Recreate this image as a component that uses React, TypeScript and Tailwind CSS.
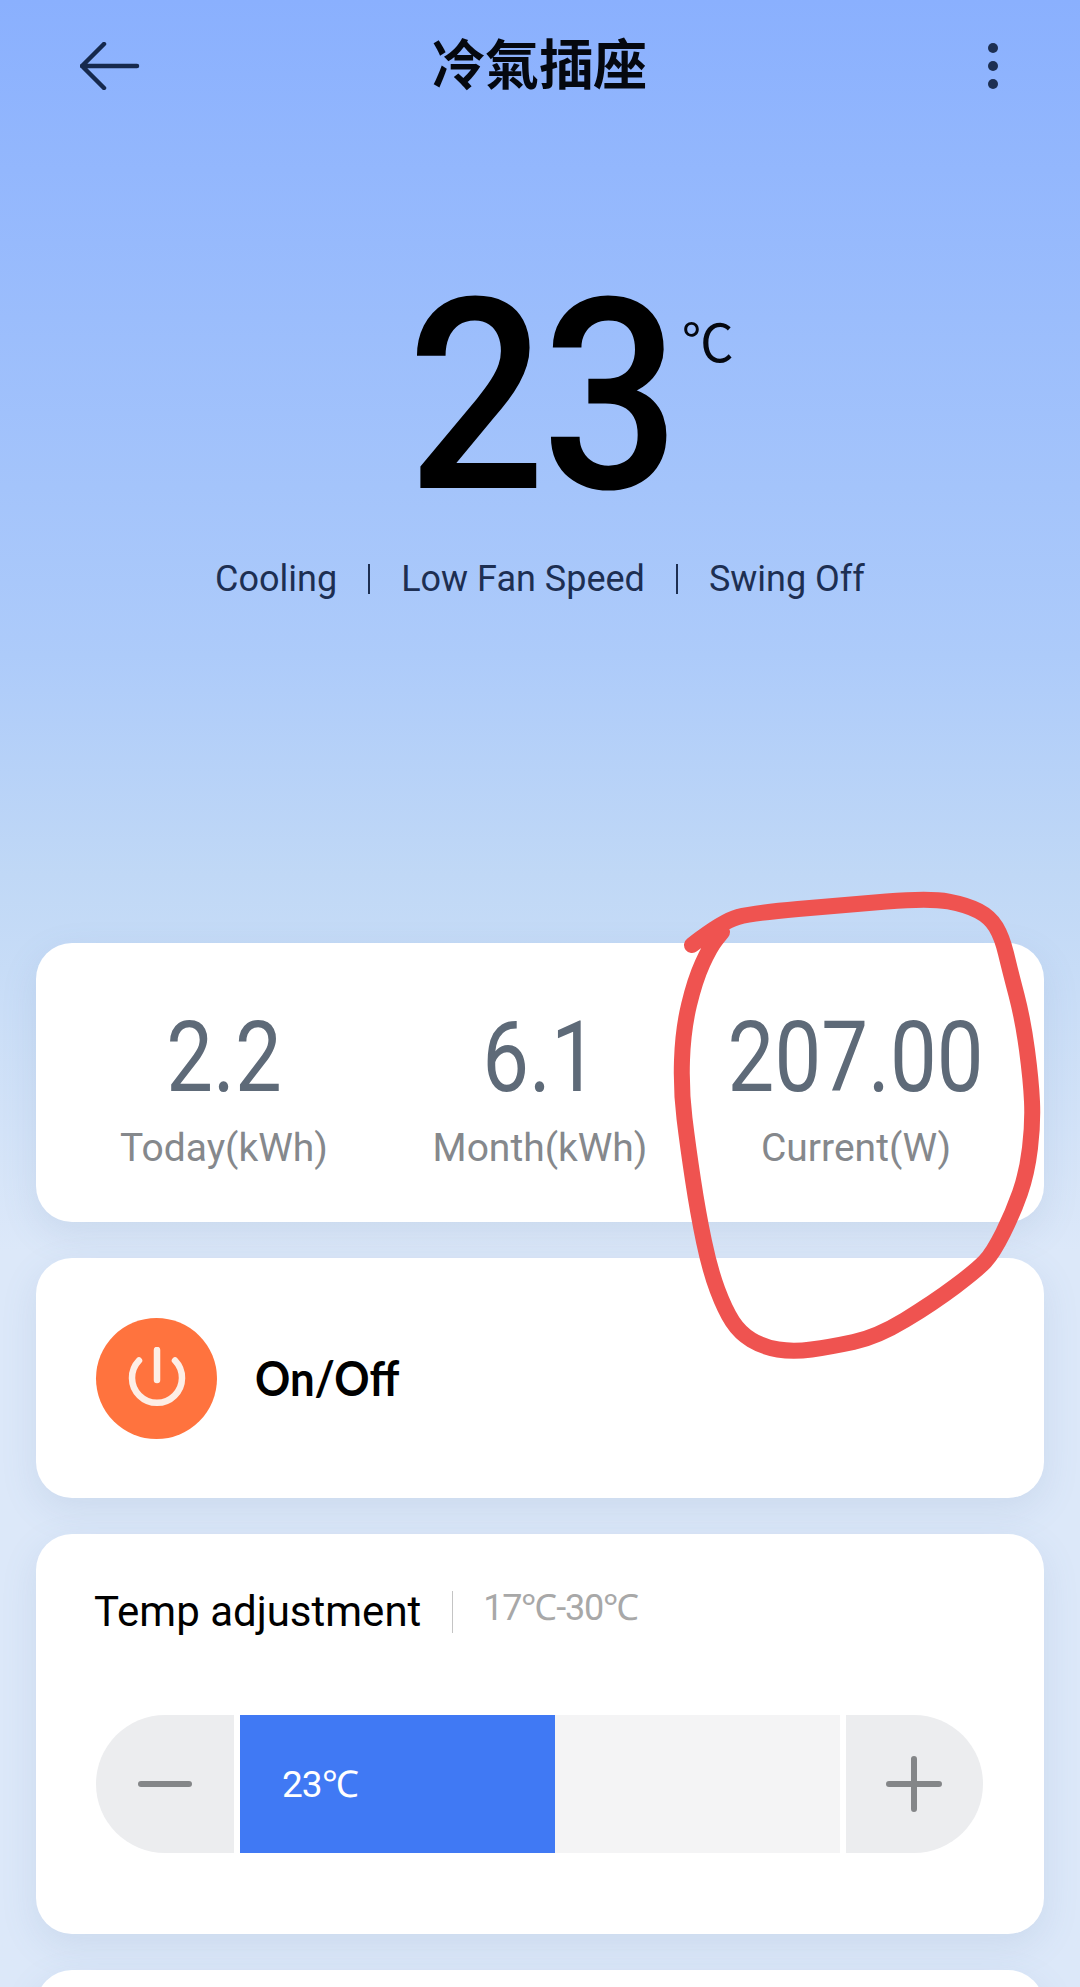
import React from "react"

const stats = [
  { value: "2.2", label: "Today(kWh)" },
  { value: "6.1", label: "Month(kWh)" },
  { value: "207.00", label: "Current(W)" },
]

// the red pen stroke drawn on the screenshot
const penPoints = [
  [692, 945], [723, 921], [753, 913], [843, 905], [930, 898], [967, 905], [990, 917],
  [1002, 937], [1010, 970], [1023, 1020], [1031, 1080], [1033, 1123], [1027, 1173],
  [1013, 1213], [993, 1253], [977, 1270], [933, 1303], [877, 1337], [830, 1347],
  [793, 1352], [763, 1347], [740, 1333], [725, 1310], [710, 1270], [698, 1213],
  [688, 1147], [681, 1090], [683, 1030], [695, 980], [710, 947], [722, 932],
]

function smoothPath(pts: number[][]) {
  let d = `M${pts[0][0]} ${pts[0][1]}`
  for (let i = 1; i < pts.length - 1; i++) {
    const mx = (pts[i][0] + pts[i + 1][0]) / 2
    const my = (pts[i][1] + pts[i + 1][1]) / 2
    d += `Q${pts[i][0]} ${pts[i][1]} ${mx} ${my}`
  }
  const last = pts[pts.length - 1]
  return d + `L${last[0]} ${last[1]}`
}

const cardClass =
  "bg-white rounded-[36px] shadow-[0_12px_36px_rgba(90,120,165,0.13)]"

function PowerIcon() {
  return (
    <svg width="60" height="62" viewBox="0 0 60 62" fill="none" stroke="#fdeee6" strokeWidth="6.5" strokeLinecap="round">
      <path d="M12 13.5a25 25 0 1 0 36 0" />
      <path d="M30 3v30" />
    </svg>
  )
}

export default function App() {
  return (
    <div className="relative w-[1080px] h-[1987px] overflow-hidden font-['Roboto',sans-serif] bg-[linear-gradient(180deg,#8ab0fe_0%,#adcbfa_33%,#c0d8f6_44%,#dce8f9_63%,#dce8f9_100%)]">
      {/* Top bar */}
      <header className="grid grid-cols-[1fr_auto_1fr] items-center h-[132px] pl-[80px] pr-[82px]">
        <svg width="60" height="48" viewBox="0 0 60 48" fill="none" stroke="#16294d" strokeWidth="4.5" strokeLinecap="round" strokeLinejoin="round">
          <path d="M2 24h55M24 2 2 24l22 22" />
        </svg>
        <h1 className="text-[54px] leading-none -mt-[8px] font-bold text-[#05080f] font-['Noto_Sans_CJK_TC',sans-serif]">
          冷氣插座
        </h1>
        <div className="flex flex-col gap-[8px] justify-self-end">
          <span className="w-[10px] h-[10px] rounded-full bg-[#1d2f52]" />
          <span className="w-[10px] h-[10px] rounded-full bg-[#1d2f52]" />
          <span className="w-[10px] h-[10px] rounded-full bg-[#1d2f52]" />
        </div>
      </header>

      {/* Current setting */}
      <section className="h-[811px] flex flex-col items-center pt-[130px]">
        <div className="flex items-start h-[270px] pl-[44px]">
          <span className="text-[267px] leading-[270px] font-medium text-black tracking-[-4px] scale-x-[0.91]">
            23
          </span>
          <span className="text-[52px] leading-none mt-[52px] -ml-[8px] text-[#05080f] tracking-[-4px] font-['Noto_Sans_CJK_TC',sans-serif]">
            ℃
          </span>
        </div>
        <div className="flex items-center mt-[25px] text-[36px] leading-[44px] text-[#1d2f52]">
          <span>Cooling</span>
          <span className="w-[2px] h-[30px] mx-[31px] bg-[#1d2f52]" />
          <span>Low Fan Speed</span>
          <span className="w-[2px] h-[30px] mx-[31px] bg-[#1d2f52]" />
          <span>Swing Off</span>
        </div>
      </section>

      <main className="flex flex-col gap-[36px] px-[36px]">
        {/* Power usage */}
        <div className={`${cardClass} h-[279px] grid grid-cols-3 px-[30px] pt-[65px]`}>
          {stats.map((s) => (
            <div key={s.label} className="flex flex-col items-center">
              <span className="text-[98px] leading-[100px] font-normal text-[#5e6a78] scale-x-[0.85]">
                {s.value}
              </span>
              <span className="mt-[18px] text-[39px] leading-[44px] font-normal text-[#85888c]">
                {s.label}
              </span>
            </div>
          ))}
        </div>

        {/* On/Off */}
        <div className={`${cardClass} h-[240px] flex items-center pl-[60px] gap-[38px]`}>
          <div className="w-[121px] h-[121px] rounded-full bg-[#ff733e] flex items-center justify-center">
            <PowerIcon />
          </div>
          <span className="text-[48px] leading-none font-bold text-black font-['Lato',sans-serif] origin-left scale-x-[0.91]">
            On/Off
          </span>
        </div>

        {/* Temp adjustment */}
        <div className={`${cardClass} h-[400px] pt-[56px] px-[58px]`}>
          <div className="flex items-center h-[44px]">
            <span className="text-[42px] leading-[44px] text-black">
              Temp adjustment
            </span>
            <span className="w-[1px] h-[42px] ml-[31px] mr-[30px] bg-[#c4c4c4]" />
            <span className="text-[36px] leading-[44px] -mt-[8px] text-[#a8a8a8] tracking-[-1.2px]">
              17℃-30℃
            </span>
          </div>
          <div className="flex h-[138px] mt-[81px] ml-[2px] w-[887px] gap-[6px]">
            <button className="w-[138px] rounded-l-full bg-[#ecedef] flex items-center justify-center">
              <span className="w-[54px] h-[6px] rounded-full bg-[#848688]" />
            </button>
            <div className="flex-1 flex bg-[#f4f4f5]">
              <div className="w-[315px] bg-[#4079f4] flex items-center pl-[42px] pt-[2px] text-[37px] text-white tracking-[-1px]">
                23℃
              </div>
            </div>
            <button className="w-[137px] rounded-r-full bg-[#ecedef] flex items-center justify-center pr-[2px]">
              <svg width="56" height="56" viewBox="0 0 56 56" fill="none" stroke="#848688" strokeWidth="6" strokeLinecap="round">
                <path d="M3 28h50M28 3v50" />
              </svg>
            </button>
          </div>
        </div>

        {/* Next card, cut off by the screen edge */}
        <div className={`${cardClass} h-[200px]`} />
      </main>

      {/* Hand-drawn annotation over the screenshot */}
      <svg className="absolute left-0 top-0 pointer-events-none" width="1080" height="1987" viewBox="0 0 1080 1987" fill="none">
        <path d={smoothPath(penPoints)} stroke="#ef5350" strokeWidth="16" strokeLinecap="round" strokeLinejoin="round" />
      </svg>
    </div>
  )
}
